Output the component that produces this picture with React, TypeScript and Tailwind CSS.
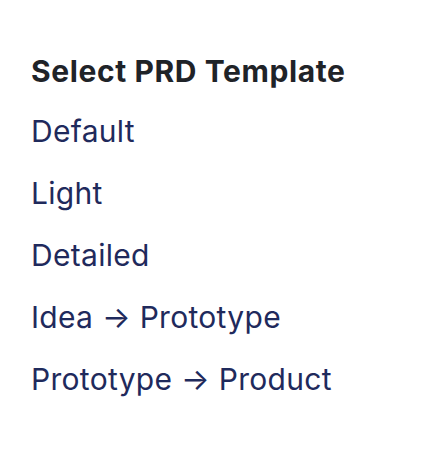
import React from 'react';

const templates = ['Default', 'Light', 'Detailed', 'Idea → Prototype', 'Prototype → Product'];

export default function App() {
  return (
    <div className="min-h-screen bg-white px-[31px] pt-[53px] font-['Inter',sans-serif]">
      <h2 className="text-[30px] font-bold leading-[36px] tracking-[0.6px] text-[#1f2328]">Select PRD Template</h2>
      <ul className="mt-[11px]">
        {templates.map((name) => (
          <li key={name} className="text-[30px] leading-[62px] tracking-[0.3px] text-[#1f2a5c]">
            {name}
          </li>
        ))}
      </ul>
    </div>
  );
}
